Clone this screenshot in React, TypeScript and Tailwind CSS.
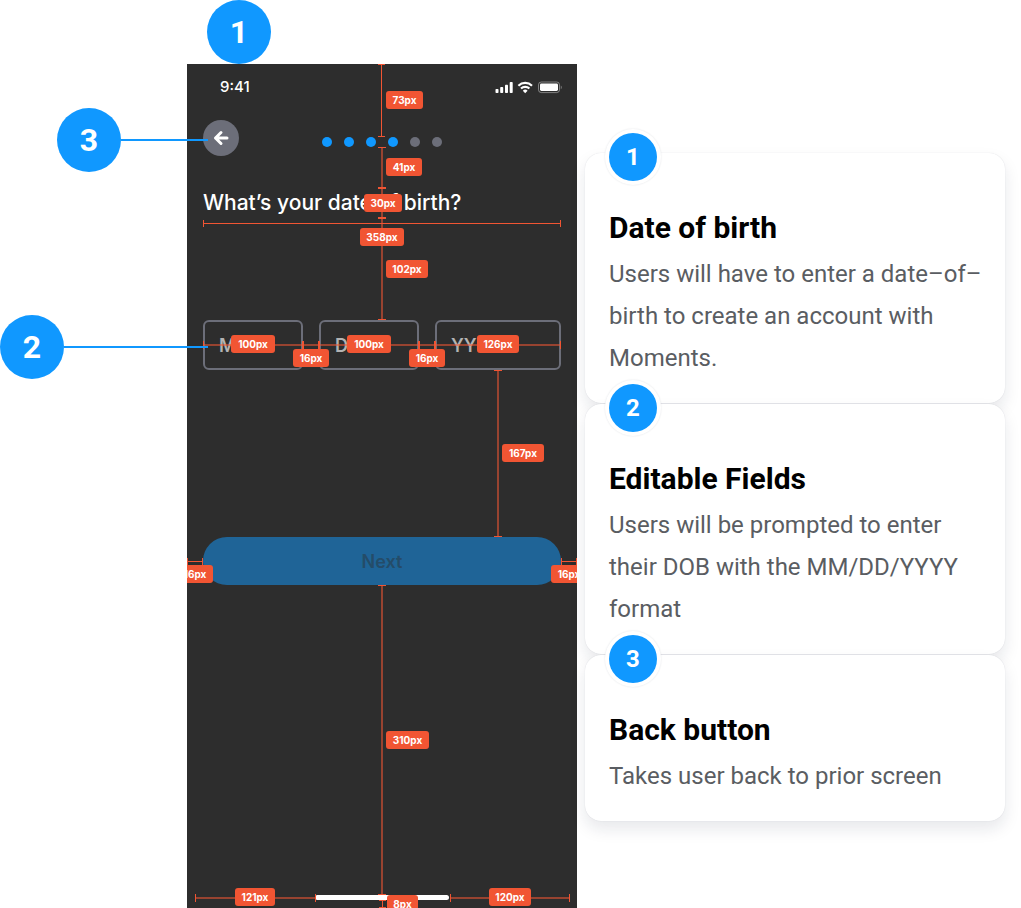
import React from "react";

const steps = [true, true, true, true, false, false];

const notes = [
  {
    id: 1,
    title: "Date of birth",
    text: "Users will have to enter a date–of–birth to create an account with Moments.",
  },
  {
    id: 2,
    title: "Editable Fields",
    text: "Users will be prompted to enter their DOB with the MM/DD/YYYY format",
  },
  { id: 3, title: "Back button", text: "Takes user back to prior screen" },
];

/** Red distance label, placed over the screen. */
function Tag({ at, children }: { at: string; children: string }) {
  return (
    <span
      className={`absolute flex h-[18px] items-center justify-center rounded-[3px] bg-[#f15533] text-[10px] font-bold text-white ${at}`}
    >
      {children}
    </span>
  );
}

/** Vertical dimension line with a cap at each end. */
function VLine({ at, thin = false }: { at: string; thin?: boolean }) {
  return (
    <span
      className={`absolute flex flex-col items-center justify-between ${thin ? "w-[7px]" : "w-2"} ${at}`}
    >
      <i className="h-px w-full bg-[#f15533]" />
      <i className={`flex-1 ${thin ? "w-px bg-[#f15533]" : "w-0.5 bg-[#f15533]/55"}`} />
      <i className="h-px w-full bg-[#f15533]" />
    </span>
  );
}

/** Horizontal dimension line with a cap at each end. */
function HLine({ at, thin = false }: { at: string; thin?: boolean }) {
  return (
    <span
      className={`absolute flex items-center justify-between ${thin ? "h-[7px]" : "h-2"} ${at}`}
    >
      <i className="h-full w-px bg-[#f15533]" />
      <i className={`flex-1 ${thin ? "h-px bg-[#f15533]" : "h-0.5 bg-[#f15533]/55"}`} />
      <i className="h-full w-px bg-[#f15533]" />
    </span>
  );
}

function Measurements() {
  return (
    <div className="pointer-events-none absolute inset-0 overflow-hidden" aria-hidden="true">
      <VLine thin at="left-[191px] top-0 h-[73px]" />
      <VLine at="left-[191px] top-[83px] h-[41px]" />
      <VLine at="left-[191px] top-[124px] h-[30px]" />
      <VLine at="left-[191px] top-[154px] h-[102px]" />
      <VLine at="left-[307px] top-[306px] h-[167px]" />
      <VLine at="left-[191px] top-[521px] h-[310px]" />
      <VLine thin at="left-[192px] top-[836px] h-2" />

      <HLine thin at="left-4 top-[156px] w-[358px]" />
      <HLine at="left-4 top-[277px] w-[100px]" />
      <HLine at="left-[116px] top-[277px] w-4" />
      <HLine at="left-[132px] top-[277px] w-[100px]" />
      <HLine at="left-[232px] top-[277px] w-4" />
      <HLine at="left-[248px] top-[277px] w-[126px]" />
      <HLine thin at="left-0 top-[494px] w-4" />
      <HLine thin at="left-[374px] top-[494px] w-4" />
      <HLine at="left-2 top-[830px] w-[121px]" />
      <HLine at="left-[263px] top-[830px] w-[120px]" />

      <Tag at="left-[199px] top-[27px] w-[37px]">73px</Tag>
      <Tag at="left-[199px] top-[94px] w-9">41px</Tag>
      <Tag at="left-[177px] top-[130px] w-[38px]">30px</Tag>
      <Tag at="left-[173px] top-[164px] w-11">358px</Tag>
      <Tag at="left-[199px] top-[196px] w-[42px]">102px</Tag>
      <Tag at="left-11 top-[271px] w-11">100px</Tag>
      <Tag at="left-40 top-[271px] w-11">100px</Tag>
      <Tag at="left-[290px] top-[271px] w-[42px]">126px</Tag>
      <Tag at="left-[106px] top-[285px] w-9">16px</Tag>
      <Tag at="left-[222px] top-[285px] w-9">16px</Tag>
      <Tag at="left-[315px] top-[380px] w-[42px]">167px</Tag>
      <Tag at="left-[-10px] top-[501px] w-9">16px</Tag>
      <Tag at="left-[364px] top-[501px] w-9">16px</Tag>
      <Tag at="left-[199px] top-[667px] w-[43px]">310px</Tag>
      <Tag at="left-12 top-[824px] w-10">121px</Tag>
      <Tag at="left-[302px] top-[824px] w-[42px]">120px</Tag>
      <Tag at="left-[200px] top-[831px] w-[31px]">8px</Tag>
    </div>
  );
}

function StatusIcons() {
  return (
    <svg width="68" height="13" viewBox="0 0 68 13" fill="#fff" aria-hidden="true">
      <rect x="0.5" y="8" width="3" height="4" rx="0.8" />
      <rect x="5.2" y="6" width="3" height="6" rx="0.8" />
      <rect x="10" y="3.7" width="3" height="8.3" rx="0.8" />
      <rect x="14.7" y="1" width="3" height="11" rx="0.8" />
      <g fill="none" stroke="#fff" strokeWidth="2.2">
        <path d="M23.4 4.7a9.8 9.8 0 0 1 13.6 0" />
        <path d="M26 7.5a6.1 6.1 0 0 1 8.4 0" />
      </g>
      <path d="M30.2 12.2l-2.4-2.5a3.5 3.5 0 0 1 4.8 0z" />
      <rect x="43.5" y="1" width="21" height="10.6" rx="2.8" fill="none" stroke="#fff" strokeOpacity="0.4" />
      <rect x="45" y="2.6" width="18" height="7.4" rx="1.4" />
      <path d="M65.8 4.4c1.2.5 1.2 3.3 0 3.9z" fillOpacity="0.45" />
    </svg>
  );
}

function Field({ label, hint, width }: { label: string; hint: string; width: string }) {
  return (
    <input
      aria-label={label}
      inputMode="numeric"
      placeholder={hint}
      className={`block h-[50px] rounded-md border-2 border-[#6c6e79] bg-transparent px-3.5 text-lg font-semibold text-white placeholder:text-[#b3b3b3] ${width}`}
    />
  );
}

function Phone() {
  return (
    <section className="relative bg-[#2d2d2d] pb-2 font-['Inter',sans-serif]">
      <div className="flex h-11 items-center justify-between pt-0.5 pr-3.5 pl-[33px]">
        <span className="text-[15px] font-medium text-white">9:41</span>
        <StatusIcons />
      </div>

      <form className="px-4" onSubmit={(e) => e.preventDefault()}>
        <div className="mt-3 grid grid-cols-[36px_1fr_36px] items-center">
          <button
            type="button"
            aria-label="Back"
            className="size-9 rounded-full bg-[#6c6e79]"
          >
            <svg viewBox="0 0 36 36" fill="none" stroke="#fff" strokeWidth="3" strokeLinecap="round" strokeLinejoin="round">
              <path d="M24 18H12.5M18 12.5L12.5 18l5.5 5.5" />
            </svg>
          </button>
          <div className="flex justify-center gap-3 pt-2">
            {steps.map((done, i) => (
              <span
                key={i}
                className={`size-2.5 rounded-full ${done ? "bg-[#1098ff]" : "bg-[#6c6e79]"}`}
              />
            ))}
          </div>
        </div>

        <h1 className="mt-8 text-[21px] leading-[30px] font-medium whitespace-nowrap text-white">
          What’s your date of birth?
        </h1>

        <div className="mt-[102px] flex gap-4">
          <Field label="Month" hint="MM" width="w-[100px]" />
          <Field label="Day" hint="DD" width="w-[100px]" />
          <Field label="Year" hint="YYYY" width="min-w-0 flex-1" />
        </div>

        <button
          type="submit"
          className="mt-[167px] h-12 w-full rounded-full bg-[#1f6497] pt-0.5 text-lg font-semibold text-[#244c69]"
        >
          Next
        </button>
      </form>

      <div className="mx-auto mt-[310px] h-[5px] w-[134px] rounded-full bg-white" />
      <Measurements />
    </section>
  );
}

function Callout({ n, at, line }: { n: number; at: string; line?: string }) {
  return (
    <div className={`absolute flex items-center ${at}`}>
      <span className="flex size-16 items-center justify-center rounded-full bg-[#1098ff] text-[32px] font-bold text-white">
        {n}
      </span>
      {line && <i className={`h-0.5 bg-[#1098ff] ${line}`} />}
    </div>
  );
}

export default function App() {
  return (
    <main className="flex items-start bg-white pl-[187px] font-['Roboto',sans-serif]">
      <div className="relative w-[390px] shrink-0 pt-16">
        <Phone />
        <Callout n={1} at="left-5 top-0" />
        <Callout n={3} at="left-[-130px] top-[108px]" line="w-[87px]" />
        <Callout n={2} at="left-[-187px] top-[315px]" line="w-36" />
      </div>

      <div className="flex min-w-0 flex-1 flex-col gap-px pt-[153px] pr-4 pl-2">
        {notes.map((note) => (
          <article
            key={note.id}
            className="relative rounded-2xl bg-white pt-14 pr-4 pb-6 pl-6 shadow-[0_0_1px_rgba(20,30,60,0.16),0_8px_16px_rgba(20,30,60,0.10)]"
          >
            <span className="absolute -top-5 left-6 flex size-12 items-center justify-center rounded-full bg-[#1098ff] text-2xl font-bold text-white shadow-[0_0_0_4px_#fff,0_0_2px_4px_rgba(20,30,60,0.12)]">
              {note.id}
            </span>
            <h2 className="mb-1.5 text-[30px] leading-[38px] font-bold text-black">{note.title}</h2>
            <p className="text-2xl leading-[42px] text-[#5a5d62]">{note.text}</p>
          </article>
        ))}
      </div>
    </main>
  );
}
